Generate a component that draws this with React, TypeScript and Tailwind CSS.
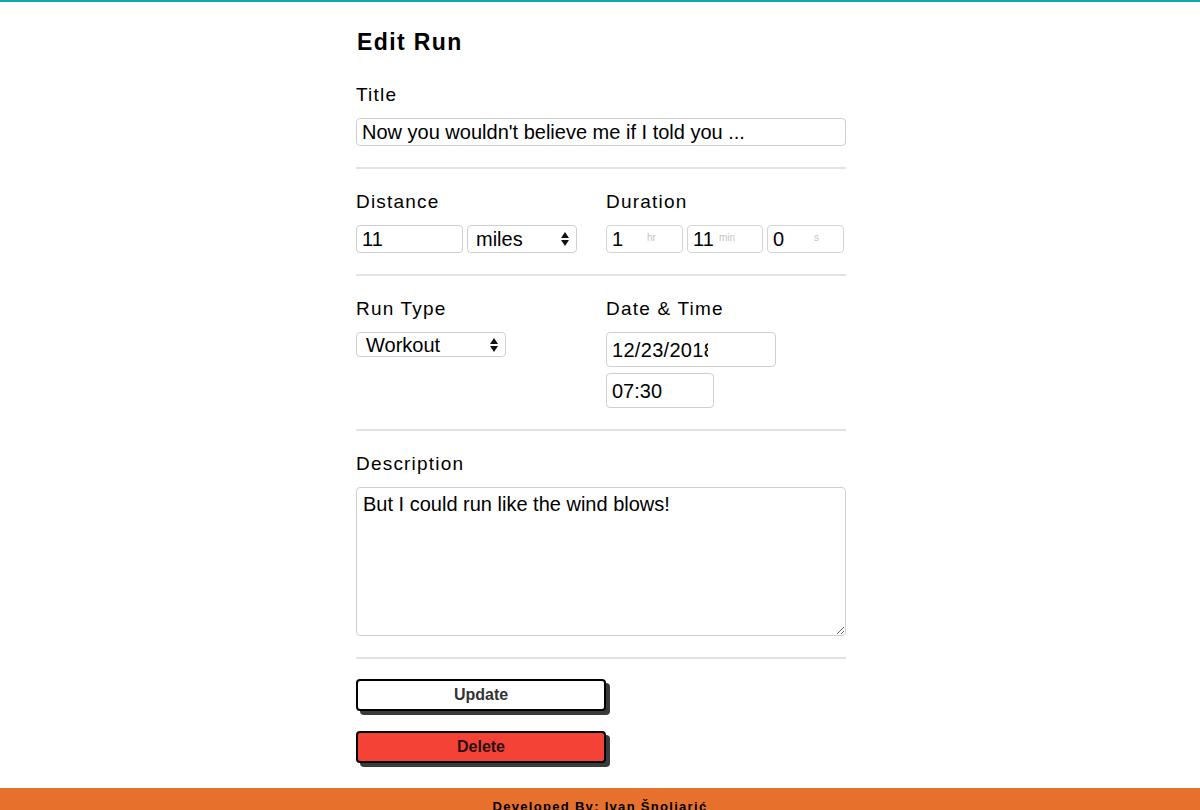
import React from 'react';

function Arrows() {
  return (
    <svg width="8" height="14" viewBox="0 0 8 14" className="pointer-events-none absolute right-[7px] top-1/2 -translate-y-1/2">
      <path d="M0 6 L4 0 L8 6 Z" fill="#111" />
      <path d="M0 8 L8 8 L4 14 Z" fill="#111" />
    </svg>
  );
}

function Select({ value, className, textPad }: { value: string; className: string; textPad: string }) {
  return (
    <div className={`relative rounded-[4px] border border-[#cfcfcf] bg-white ${className}`}>
      <div className={`flex h-full items-center text-[20px] text-black ${textPad}`}>{value}</div>
      <Arrows />
    </div>
  );
}

function DurationBox({ value, unit, unitLeft, className }: { value: string; unit: string; unitLeft: string; className: string }) {
  return (
    <div className={`relative h-[28px] rounded-[4px] border border-[#d4d4d4] bg-white ${className}`}>
      <input
        type="text"
        defaultValue={value}
        className="h-full w-full bg-transparent pl-[5px] text-[20px] text-black outline-none"
      />
      <span className={`pointer-events-none absolute top-[4px] text-[10px] text-[#c4c4c4] ${unitLeft}`}>{unit}</span>
    </div>
  );
}

function Label({ children }: { children: React.ReactNode }) {
  return <div className="mb-[12px] text-[19px] leading-[22px] tracking-[1.2px] text-black">{children}</div>;
}

export default function App() {
  return (
    <div className="min-h-[810px] border-t-2 border-[#0ea7b0] bg-white font-['Liberation_Sans',Arial,sans-serif]">
      <div className="mx-auto w-[492px] pl-[2px]">
        <div className="border-b-2 border-[#e3e3e3] pt-[27px] pb-[21px]">
          <h1 className="mb-[29px] pl-[1px] text-[23px] font-bold leading-[26px] tracking-[1.4px] text-black">Edit Run</h1>
          <Label>Title</Label>
          <input
            type="text"
            defaultValue="Now you wouldn't believe me if I told you ..."
            className="h-[28px] w-[490px] rounded-[4px] border border-[#cfcfcf] pl-[5px] text-[20px] text-black outline-none"
          />
        </div>

        <div className="flex border-b-2 border-[#e3e3e3] pt-[22px] pb-[21px]">
          <div className="w-[250px]">
            <Label>Distance</Label>
            <div className="flex gap-[4px]">
              <input
                type="text"
                defaultValue="11"
                className="h-[28px] w-[107px] rounded-[4px] border border-[#cfcfcf] pl-[5px] text-[20px] text-black outline-none"
              />
              <Select value="miles" className="h-[28px] w-[110px]" textPad="pl-[8px]" />
            </div>
          </div>
          <div>
            <Label>Duration</Label>
            <div className="flex gap-[4px]">
              <DurationBox value="1" unit="hr" unitLeft="left-[40px]" className="w-[77px]" />
              <DurationBox value="11" unit="min" unitLeft="left-[31px]" className="w-[76px]" />
              <DurationBox value="0" unit="s" unitLeft="left-[46px]" className="w-[77px]" />
            </div>
          </div>
        </div>

        <div className="flex border-b-2 border-[#e3e3e3] pt-[22px] pb-[21px]">
          <div className="w-[250px]">
            <Label>Run Type</Label>
            <Select value="Workout" className="mt-[1px] h-[25px] w-[150px]" textPad="pl-[9px]" />
          </div>
          <div>
            <Label>Date &amp; Time</Label>
            <div className="flex h-[35px] w-[170px] items-center rounded-[4px] border border-[#cfcfcf] pl-[5px]">
              <span className="w-[96px] overflow-hidden whitespace-nowrap text-[20px] tracking-[0.3px] text-black">12/23/2018</span>
            </div>
            <div className="mt-[6px] flex h-[35px] w-[108px] items-center rounded-[4px] border border-[#cfcfcf] pl-[5px]">
              <span className="text-[20px] text-black">07:30</span>
            </div>
          </div>
        </div>

        <div className="border-b-2 border-[#e3e3e3] pt-[22px] pb-[21px]">
          <Label>Description</Label>
          <textarea
            defaultValue="But I could run like the wind blows!"
            className="block h-[149px] w-[490px] rounded-[4px] border border-[#cfcfcf] px-[6px] pt-[5px] text-[20px] leading-[23px] text-black outline-none"
          />
        </div>

        <div className="flex flex-col gap-[20px] pt-[20px] pb-[25px]">
          <button className="h-[32px] w-[250px] rounded-[4px] border-2 border-black bg-white text-[16px] font-bold text-[#333] shadow-[4px_4px_0_#3a3a3a]">
            Update
          </button>
          <button className="h-[32px] w-[250px] rounded-[4px] border-2 border-black bg-[#f44336] text-[16px] font-bold text-[#2b1111] shadow-[4px_4px_0_#3a3a3a]">
            Delete
          </button>
        </div>
      </div>

      <footer className="bg-[#e8702d] pt-[9px] pb-[20px] text-center text-[13px] font-bold tracking-[1.3px] text-black">
        Developed By: Ivan Šnoljarić
      </footer>
    </div>
  );
}
